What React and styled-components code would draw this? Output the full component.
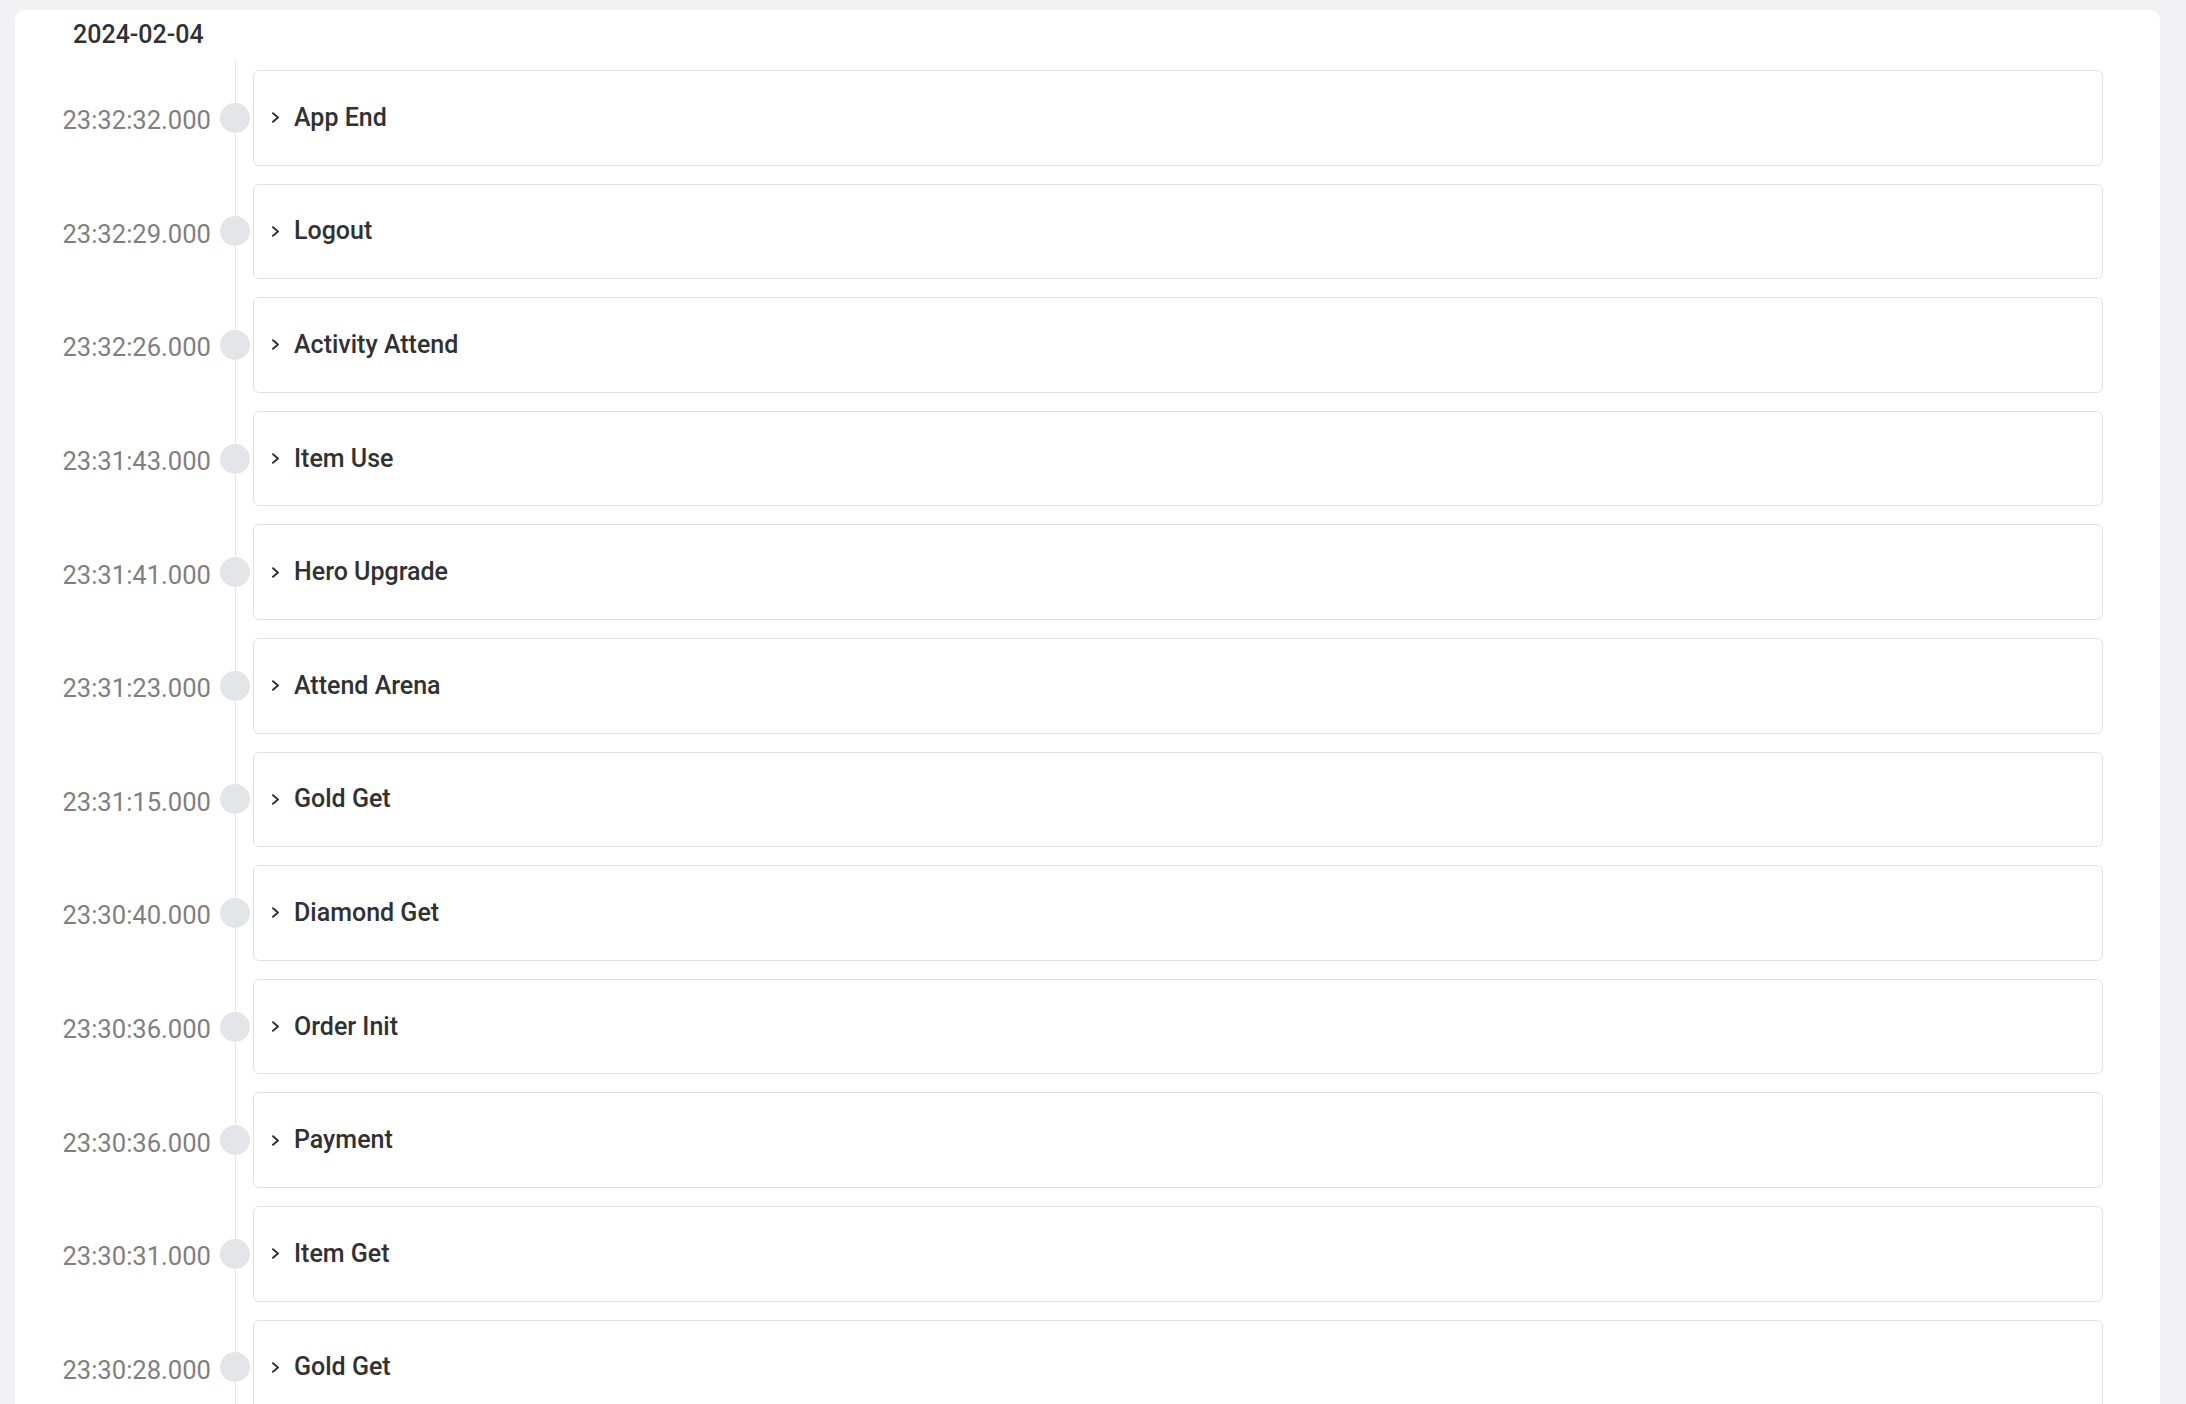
import React from "react";
import styled, { createGlobalStyle } from "styled-components";

const GlobalStyle = createGlobalStyle`
  html, body {
    margin: 0;
    padding: 0;
    background: #f2f2f4;
    font-family: Roboto, "Liberation Sans", Arial, sans-serif;
    overflow: hidden;
  }
`;

const Page = styled.div`
  padding: 10px 26px 0 15px;
`;

const Panel = styled.section`
  background: #ffffff;
  border-radius: 10px;
  padding: 10px 57px 24px 0;
`;

const DateHeading = styled.h2`
  margin: 0 0 11px 58px;
  font-size: 25px;
  line-height: 30px;
  font-weight: 500;
  color: #303133;
`;

const Timeline = styled.ol`
  list-style: none;
  margin: 0;
  padding: 0;
`;

const Item = styled.li`
  display: grid;
  grid-template-columns: 195px 30px 1fr;
  column-gap: 10px;
  align-items: stretch;
  & > :last-child {
    margin-left: -7px;
  }
`;

const Time = styled.div`
  align-self: center;
  padding-top: 5px;
  margin-right: -1px;
  text-align: right;
  font-size: 25.6px;
  line-height: 30px;
  color: #7f7f7f;
  white-space: nowrap;
`;

const Rail = styled.div`
  display: flex;
  align-items: center;
  justify-content: center;
  background: linear-gradient(#e4e4e6, #e4e4e6) no-repeat 14.5px 0 / 1px 100%;
`;

const Dot = styled.span`
  width: 30px;
  height: 30px;
  border-radius: 50%;
  background: #e4e5e8;
`;

const CardWrap = styled.div`
  padding: 9px 0;
`;

const Card = styled.div`
  box-sizing: border-box;
  height: 95.6px;
  border: 1px solid #e2e2e4;
  border-radius: 6px;
  display: flex;
  align-items: center;
  gap: 14px;
  padding-left: 17px;
  background: #fff;
`;

const Chevron = styled.svg`
  width: 9px;
  height: 11px;
  flex: none;
  color: #303133;
`;

const Title = styled.span`
  font-size: 25px;
  line-height: 30px;
  font-weight: 500;
  color: #303133;
`;

const events = [
  ["23:32:32.000", "App End"],
  ["23:32:29.000", "Logout"],
  ["23:32:26.000", "Activity Attend"],
  ["23:31:43.000", "Item Use"],
  ["23:31:41.000", "Hero Upgrade"],
  ["23:31:23.000", "Attend Arena"],
  ["23:31:15.000", "Gold Get"],
  ["23:30:40.000", "Diamond Get"],
  ["23:30:36.000", "Order Init"],
  ["23:30:36.000", "Payment"],
  ["23:30:31.000", "Item Get"],
  ["23:30:28.000", "Gold Get"],
];

export default function App() {
  return (
    <>
      <GlobalStyle />
      <Page>
        <Panel>
          <DateHeading>2024-02-04</DateHeading>
          <Timeline>
            {events.map(([time, name], i) => (
              <Item key={i}>
                <Time>{time}</Time>
                <Rail>
                  <Dot />
                </Rail>
                <CardWrap>
                  <Card>
                    <Chevron viewBox="0 0 9 11" fill="none">
                      <path
                        d="M2 1.2 L7 5.5 L2 9.8"
                        stroke="currentColor"
                        strokeWidth="1.9"
                        strokeLinecap="round"
                        strokeLinejoin="round"
                      />
                    </Chevron>
                    <Title>{name}</Title>
                  </Card>
                </CardWrap>
              </Item>
            ))}
          </Timeline>
        </Panel>
      </Page>
    </>
  );
}
